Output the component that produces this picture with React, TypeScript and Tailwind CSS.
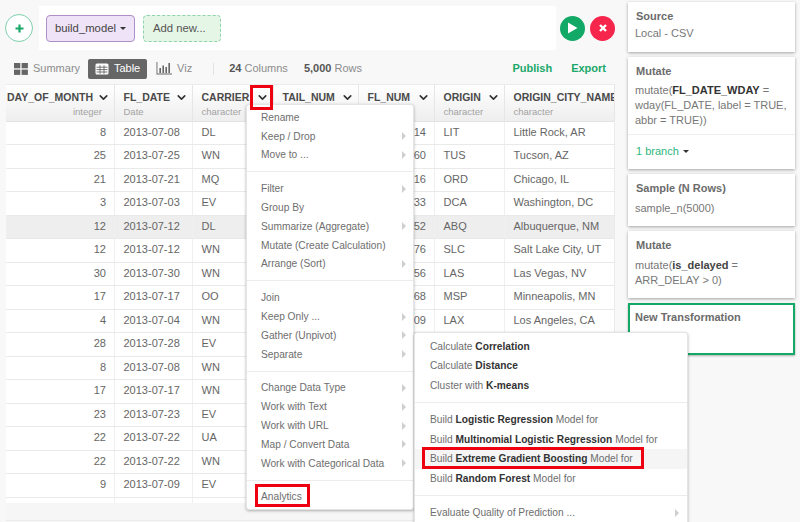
import { ChevronDown } from "lucide-react";

const rows = [
  ["8", "2013-07-08", "DL", "1614", "LIT", "Little Rock, AR"],
  ["25", "2013-07-25", "WN", "2560", "TUS", "Tucson, AZ"],
  ["21", "2013-07-21", "MQ", "3316", "ORD", "Chicago, IL"],
  ["3", "2013-07-03", "EV", "4133", "DCA", "Washington, DC"],
  ["12", "2013-07-12", "DL", "1852", "ABQ", "Albuquerque, NM"],
  ["12", "2013-07-12", "WN", "2676", "SLC", "Salt Lake City, UT"],
  ["30", "2013-07-30", "WN", "1456", "LAS", "Las Vegas, NV"],
  ["17", "2013-07-17", "OO", "5368", "MSP", "Minneapolis, MN"],
  ["4", "2013-07-04", "WN", "1209", "LAX", "Los Angeles, CA"],
  ["28", "2013-07-28", "EV", "", "", ""],
  ["8", "2013-07-08", "WN", "", "", ""],
  ["17", "2013-07-17", "WN", "", "", ""],
  ["23", "2013-07-23", "EV", "", "", ""],
  ["22", "2013-07-22", "UA", "", "", ""],
  ["22", "2013-07-22", "WN", "", "", ""],
  ["9", "2013-07-09", "EV", "", "", ""],
];

const cols = "grid grid-cols-[109px_78px_81px_85px_76px_70px_110px]";

function HeaderCell({ name, type, right, last }: { name: string; type: string; right?: boolean; last?: boolean }) {
  return (
    <div className={`flex h-full flex-col overflow-hidden border-r border-[#e6e6e6] pt-[5px] ${last ? "pl-[8.5px]" : "pl-[8.5px] pr-[4px]"} ${right ? "items-end pl-0" : ""}`}>
      <div className={`flex items-center text-[10.5px] font-bold leading-[14px] text-[#4a4a4a] ${right ? "justify-end gap-[4px]" : "w-full justify-between"}`}>
        <span className="whitespace-nowrap">{name}</span>
        {!last && <ChevronDown size={13} strokeWidth={3} className="shrink-0 text-[#333]" />}
      </div>
      <div className={`mt-[1px] text-[9.5px] leading-[14px] text-[#a3a3a3] ${right ? "pr-[8px] text-right" : ""}`}>{type}</div>
    </div>
  );
}

function Arrow() {
  return <span className="h-0 w-0 border-y-[4px] border-l-[4px] border-y-transparent border-l-[#cfcfcf]" />;
}

function MenuItem({ label, sub }: { label: string; sub?: boolean }) {
  return (
    <div className="flex h-[18.8px] items-center justify-between pl-[14px] pr-[7px] text-[10.2px] text-[#6e6e6e]">
      <span>{label}</span>
      {sub && <Arrow />}
    </div>
  );
}

function Divider() {
  return <div className="my-[7px] h-px bg-[#ececec]" />;
}

function SubItem({ pre, bold, post, active }: { pre: string; bold: string; post?: string; active?: boolean }) {
  return (
    <div className={`flex h-[19.5px] items-center pl-[15px] text-[10.2px] text-[#6e6e6e] ${active ? "bg-[#f5f5f5]" : ""}`}>
      <span>
        {pre} <b className="font-bold text-[#333]">{bold}</b> {post}
      </span>
    </div>
  );
}

function Card({ title, children, className }: { title: string; children?: React.ReactNode; className?: string }) {
  return (
    <div className={`bg-white shadow-[0_1px_3px_rgba(0,0,0,0.35)] ${className ?? ""}`}>
      <div className="pl-[8px] pt-[7px] text-[11px] font-bold leading-[14px] text-[#6b6b6b]">{title}</div>
      {children}
    </div>
  );
}

export default function App() {
  return (
    <div className="relative flex h-[522px] w-[800px] overflow-hidden bg-[#f8f8f8] font-['Liberation_Sans',sans-serif]">
      <div className="w-[622px] shrink-0">
        {/* step bar */}
        <div className="flex h-[56px] items-center pl-[5px]">
          <div className="flex h-[28px] w-[28px] items-center justify-center rounded-full border border-[#7fd0ad] bg-white text-[#1aa86a]">
            <svg width="11" height="11" viewBox="0 0 11 11">
              <path d="M5.5 1.5v8M1.5 5.5h8" stroke="currentColor" strokeWidth="2.2" />
            </svg>
          </div>
          <div className="ml-[6px] flex h-[44px] w-[517px] items-center gap-[8px] bg-white pl-[7px]">
            <div className="flex h-[27px] w-[89px] items-center justify-center gap-[4px] rounded-[4px] border border-[#b08fc7] bg-[#efe3f7] text-[11.3px] text-[#444]">
              build_model
              <span className="h-0 w-0 border-x-[3px] border-t-[3px] border-x-transparent border-t-[#333]" />
            </div>
            <div className="flex h-[27px] w-[78px] items-center rounded-[4px] border border-dashed border-[#8fd3ac] bg-[#e6f6e6] pl-[9px] text-[11.3px] text-[#555]">
              Add new...
            </div>
          </div>
          <div className="ml-[4px] flex h-[25px] w-[25px] items-center justify-center rounded-full bg-[#12a866]">
            <svg width="11" height="12" viewBox="0 0 11 12">
              <path d="M1 0.5 10.5 6 1 11.5z" fill="#fff" />
            </svg>
          </div>
          <div className="ml-[5px] flex h-[25px] w-[25px] items-center justify-center rounded-full bg-[#f5254c]">
            <svg width="8" height="8" viewBox="0 0 8 8">
              <path d="M1 1l6 6M7 1 1 7" stroke="#fff" strokeWidth="2.4" />
            </svg>
          </div>
        </div>

        {/* view tabs */}
        <div className="-mt-[1px] mb-[2px] flex h-[27px] items-center pl-[14px] text-[11px] text-[#8c8c8c]">
          <svg width="14" height="12" viewBox="0 0 14 12" fill="#666">
            <rect x="0" y="0" width="6.3" height="5.3" />
            <rect x="7.6" y="0" width="6.3" height="5.3" />
            <rect x="0" y="6.6" width="6.3" height="5.3" />
            <rect x="7.6" y="6.6" width="6.3" height="5.3" />
          </svg>
          <span className="ml-[5px]">Summary</span>
          <div className="ml-[8px] flex h-[20px] w-[59px] items-center justify-center gap-[5px] rounded-[2px] bg-[#666] text-white">
            <svg width="14" height="12" viewBox="0 0 14 12">
              <rect x="0.5" y="0.5" width="13" height="11" rx="1.5" fill="#fff" />
              <path d="M1.5 4.2h11M1.5 6.6h11M1.5 9h11M5 2.2v8.6M9 2.2v8.6" stroke="#666" strokeWidth="0.9" />
            </svg>
            Table
          </div>
          <svg className="ml-[9px]" width="16" height="13" viewBox="0 0 16 13" fill="#666">
            <path d="M0.5 0v12.5H16v-0.9H1.4V0z" />
            <rect x="3.4" y="6" width="1.6" height="5" />
            <rect x="6.4" y="3.5" width="1.6" height="7.5" />
            <rect x="9.4" y="5" width="1.6" height="6" />
            <rect x="12.4" y="1" width="1.6" height="10" />
          </svg>
          <span className="ml-[5px]">Viz</span>
          <div className="ml-[21px] h-[12px] w-px bg-[#e2e2e2]" />
          <span className="ml-[15px]"><b className="font-bold text-[#555]">24</b> Columns</span>
          <span className="ml-[16px]"><b className="font-bold text-[#555]">5,000</b> Rows</span>
          <span className="ml-auto font-bold text-[#1aa86a]">Publish</span>
          <span className="ml-[19px] mr-[16px] font-bold text-[#1aa86a]">Export</span>
        </div>

        {/* data table */}
        <div className="ml-[6px] h-[437px] w-[609px] border-y border-r border-[#ebebeb] bg-[#f6f6f6]">
          <div className={`${cols} h-[37px] border-b border-[#e3e3e3] bg-gradient-to-b from-white to-[#eeeeee]`}>
            <HeaderCell name="DAY_OF_MONTH" type="integer" right />
            <HeaderCell name="FL_DATE" type="Date" />
            <HeaderCell name="CARRIER" type="character" />
            <HeaderCell name="TAIL_NUM" type="character" />
            <HeaderCell name="FL_NUM" type="integer" />
            <HeaderCell name="ORIGIN" type="character" />
            <HeaderCell name="ORIGIN_CITY_NAME" type="character" last />
          </div>
          <div className="h-[381px] overflow-hidden bg-white">
            {[...rows, ["", "", "", "", "", ""]].map((r, i) => (
              <div
                key={i}
                className={`${cols} h-[23.47px] border-b border-[#e9e9e9] text-[11px] leading-[21px] text-[#666] ${i === 4 ? "bg-[#eeeeee]" : ""}`}
              >
                <div className="border-r border-[#f0f0f0] pr-[8px] text-right">{r[0]}</div>
                <div className="border-r border-[#f0f0f0] pl-[8.5px]">{r[1]}</div>
                <div className="border-r border-[#f0f0f0] pl-[8.5px]">{r[2]}</div>
                <div className="border-r border-[#f0f0f0]" />
                <div className="border-r border-[#f0f0f0] pr-[8px] text-right">{r[3]}</div>
                <div className="border-r border-[#f0f0f0] pl-[8.5px]">{r[4]}</div>
                <div className="overflow-hidden whitespace-nowrap pl-[8.5px]">{r[5]}</div>
              </div>
            ))}
          </div>
        </div>
      </div>

      {/* step list */}
      <div className="ml-[6px] flex w-[167px] shrink-0 flex-col gap-[5px] pt-[2px]">
        <Card title="Source" className="h-[50px]">
          <div className="pl-[7px] pt-[3px] text-[11px] leading-[15px] text-[#777]">Local - CSV</div>
        </Card>
        <Card title="Mutate" className="h-[112px]">
          <div className="pl-[7px] pr-[4px] pt-[5px] text-[11px] leading-[15px] text-[#777]">
            mutate(<b className="font-bold text-[#333]">FL_DATE_WDAY</b> = wday(FL_DATE, label = TRUE, abbr = TRUE))
          </div>
          <div className="mt-[6px] flex items-center gap-[4px] border-t border-[#eeeeee] pl-[8px] pt-[9px] text-[11px] leading-[15px] text-[#2eb67d]">
            1 branch
            <span className="h-0 w-0 border-x-[3px] border-t-[3px] border-x-transparent border-t-[#333]" />
          </div>
        </Card>
        <Card title="Sample (N Rows)" className="h-[52px]">
          <div className="pl-[7px] pt-[6px] text-[11px] leading-[15px] text-[#777]">sample_n(5000)</div>
        </Card>
        <Card title="Mutate" className="h-[67px]">
          <div className="pl-[7px] pt-[6px] text-[11px] leading-[15px] text-[#777]">
            mutate(<b className="font-bold text-[#444]">is_delayed</b> =<br />ARR_DELAY &gt; 0)
          </div>
        </Card>
        <div className="h-[52px] border-2 border-[#12a866] bg-white pl-[5px] pt-[5px] text-[11px] font-bold leading-[14px] text-[#6b6b6b] shadow-[0_1px_2px_rgba(0,0,0,0.3)]">
          New Transformation
        </div>
      </div>

      {/* column menu */}
      <div className="absolute left-[246px] top-[104px] w-[168px] rounded-[3px] border border-[#e4e4e4] bg-white pt-[3px] shadow-[0_1px_3px_rgba(0,0,0,0.3)]">
        <MenuItem label="Rename" />
        <MenuItem label="Keep / Drop" sub />
        <MenuItem label="Move to ..." sub />
        <Divider />
        <MenuItem label="Filter" sub />
        <MenuItem label="Group By" />
        <MenuItem label="Summarize (Aggregate)" sub />
        <MenuItem label="Mutate (Create Calculation)" />
        <MenuItem label="Arrange (Sort)" sub />
        <Divider />
        <MenuItem label="Join" />
        <MenuItem label="Keep Only ..." sub />
        <MenuItem label="Gather (Unpivot)" sub />
        <MenuItem label="Separate" sub />
        <Divider />
        <MenuItem label="Change Data Type" sub />
        <MenuItem label="Work with Text" sub />
        <MenuItem label="Work with URL" sub />
        <MenuItem label="Map / Convert Data" sub />
        <MenuItem label="Work with Categorical Data" sub />
        <Divider />
        <MenuItem label="Analytics" />
        <div className="h-[3px]" />
      </div>

      {/* analytics submenu */}
      <div className="absolute left-[414px] top-[332px] h-[200px] w-[274px] rounded-[3px] border border-[#e4e4e4] bg-white pt-[3.5px] shadow-[0_1px_3px_rgba(0,0,0,0.3)]">
        <SubItem pre="Calculate" bold="Correlation" />
        <SubItem pre="Calculate" bold="Distance" />
        <SubItem pre="Cluster with" bold="K-means" />
        <div className="my-[7px] h-px bg-[#ececec]" />
        <SubItem pre="Build" bold="Logistic Regression" post="Model for" />
        <SubItem pre="Build" bold="Multinomial Logistic Regression" post="Model for" />
        <SubItem pre="Build" bold="Extreme Gradient Boosting" post="Model for" active />
        <SubItem pre="Build" bold="Random Forest" post="Model for" />
        <div className="my-[7px] h-px bg-[#ececec]" />
        <div className="flex h-[19.5px] items-center justify-between pl-[15px] pr-[8px] text-[10.2px] text-[#6e6e6e]">
          Evaluate Quality of Prediction ...
          <Arrow />
        </div>
      </div>

      {/* red callouts */}
      <div className="absolute left-[250px] top-[85px] h-[25px] w-[23px] border-[3px] border-[#ee0011]" />
      <div className="absolute left-[255px] top-[484px] h-[23px] w-[55px] border-[3px] border-[#ee0011]" />
      <div className="absolute left-[422px] top-[447px] h-[22px] w-[222px] border-[3px] border-[#ee0011]" />
    </div>
  );
}
